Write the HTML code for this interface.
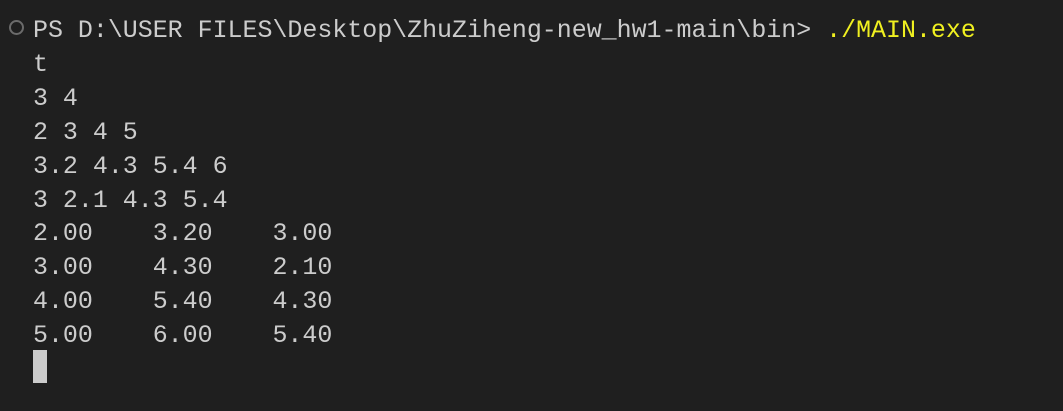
<!DOCTYPE html>
<html><head><style>
html,body{margin:0;padding:0;background:#1f1f1f;width:1063px;height:411px;overflow:hidden}
.t{position:absolute;left:33px;top:15px;font-family:"Liberation Mono",monospace;font-size:24.95px;line-height:33.9px;color:#cccccc;white-space:pre}
.y{color:#f0f020}
.c{position:absolute;left:9px;top:20px;width:11px;height:11px;border:2.5px solid #6b6b6b;border-radius:50%}
.cur{position:absolute;left:33px;top:350px;width:14px;height:33px;background:#cccccc}
</style></head><body>
<div class="c"></div>
<div class="t">PS D:\USER FILES\Desktop\ZhuZiheng-new_hw1-main\bin> <span class="y">./MAIN.exe</span>
t
3 4
2 3 4 5
3.2 4.3 5.4 6
3 2.1 4.3 5.4
2.00    3.20    3.00
3.00    4.30    2.10
4.00    5.40    4.30
5.00    6.00    5.40</div>
<div class="cur"></div>
</body></html>
